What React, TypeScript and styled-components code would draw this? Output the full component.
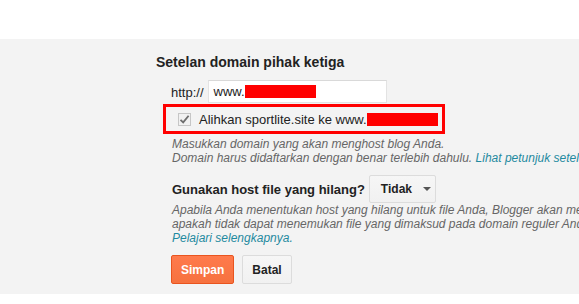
import { createGlobalStyle } from "styled-components";
import styled from "styled-components";

const GlobalStyle = createGlobalStyle`
  html, body {
    margin: 0;
    padding: 0;
    background: #ffffff;
    overflow: hidden;
  }
  body {
    font-family: Arial, "Liberation Sans", sans-serif;
    color: #222;
  }
`;

const App = () => {
    return (
        <>
            <GlobalStyle />
            <_Top />
            <_Panel>
                <_Title>Setelan domain pihak ketiga</_Title>
                <_DomainRow>
                    <_Prefix>http://</_Prefix>
                    <_Input>
                        www.<_Redact width={71} />
                    </_Input>
                </_DomainRow>
                <_Highlight>
                    <_Checkbox>
                        <svg width="11" height="11" viewBox="0 0 11 11">
                            <path d="M1.5 5.8 L4.2 8.4 L9.6 1.8" fill="none" stroke="#6d6d6d" strokeWidth="1.8" />
                        </svg>
                    </_Checkbox>
                    <_CheckLabel>
                        Alihkan sportlite.site ke www.<_Redact width={71} />
                    </_CheckLabel>
                </_Highlight>
                <_Help>
                    Masukkan domain yang akan menghost blog Anda.<br />
                    Domain harus didaftarkan dengan benar terlebih dahulu. <_Link>Lihat petunjuk setelan</_Link>
                </_Help>
                <_HostRow>
                    <_Label>Gunakan host file yang hilang?</_Label>
                    <_Select>
                        Tidak
                        <_Arrow />
                    </_Select>
                </_HostRow>
                <_Help2>
                    Apabila Anda menentukan host yang hilang untuk file Anda, Blogger akan memeriksa host ini<br />
                    apakah tidak dapat menemukan file yang dimaksud pada domain reguler Anda.<br />
                    <_Link>Pelajari selengkapnya.</_Link>
                </_Help2>
                <_Buttons>
                    <_Button primary>Simpan</_Button>
                    <_Button>Batal</_Button>
                </_Buttons>
            </_Panel>
        </>
    );
};

export default App;

// 上の白い帯
const _Top = styled.div`
  height: 39px;
  background: #ffffff;
`;

// グレーのパネル
const _Panel = styled.div`
  background: #f3f3f3;
  height: 255px;
  box-sizing: border-box;
  padding: 15px 0 0 156px;
  display: flex;
  flex-direction: column;
  align-items: flex-start;
  white-space: nowrap;
`;

const _Title = styled.div`
  font-size: 14px;
  font-weight: bold;
  line-height: 17px;
  color: #222;
`;

const _DomainRow = styled.div`
  margin-top: 9px;
  margin-left: 15px;
  display: flex;
  align-items: center;
`;

const _Prefix = styled.span`
  font-size: 13px;
  color: #222;
  margin-right: 4px;
  padding-top: 2px;
`;

const _Input = styled.div`
  width: 179px;
  height: 23px;
  box-sizing: border-box;
  background: #fff;
  border: 1px solid #e3e3e3;
  border-top-color: #d9d9d9;
  padding: 0 0 0 5px;
  font-size: 13px;
  color: #222;
  display: flex;
  align-items: center;
`;

// 黒塗り
const _Redact = styled.span<{ width: number }>`
  display: inline-block;
  width: ${props => props.width}px;
  height: 13px;
  background: #ff0000;
  vertical-align: -2px;
`;

// 赤枠
const _Highlight = styled.div`
  margin-top: 1px;
  margin-left: 7px;
  width: 282px;
  height: 30px;
  box-sizing: border-box;
  border: 3px solid #ff0000;
  display: flex;
  align-items: center;
  padding-left: 12px;
`;

const _Checkbox = styled.span`
  width: 13px;
  height: 13px;
  box-sizing: border-box;
  border: 1px solid #c6c6c6;
  background: #f1f1f1;
  display: flex;
  align-items: center;
  justify-content: center;
  margin-right: 8px;
`;

const _CheckLabel = styled.span`
  font-size: 13px;
  color: #222;
`;

const _Help = styled.div`
  margin-top: 3px;
  margin-left: 16px;
  font-size: 12px;
  line-height: 14px;
  font-style: italic;
  color: #666;
`;

const _Link = styled.span`
  color: #1f8aa0;
`;

const _HostRow = styled.div`
  margin-top: 10px;
  margin-left: 16px;
  display: flex;
  align-items: center;
`;

const _Label = styled.span`
  font-size: 13px;
  font-weight: bold;
  color: #222;
  margin-right: 4px;
`;

const _Select = styled.div`
  width: 67px;
  height: 28px;
  box-sizing: border-box;
  border: 1px solid #dcdcdc;
  border-radius: 2px;
  background: linear-gradient(#f6f6f6, #f1f1f1);
  font-size: 12px;
  font-weight: bold;
  color: #222;
  display: flex;
  align-items: center;
  padding-left: 11px;
`;

const _Arrow = styled.span`
  margin-left: 11px;
  width: 0;
  height: 0;
  border-left: 4px solid transparent;
  border-right: 4px solid transparent;
  border-top: 4px solid #555;
`;

const _Help2 = styled.div`
  margin-top: 0px;
  margin-left: 16px;
  font-size: 12px;
  line-height: 14px;
  font-style: italic;
  color: #666;
`;

const _Buttons = styled.div`
  margin-top: 10px;
  margin-left: 15px;
  display: flex;
  gap: 8px;
`;

const _Button = styled.div<{ primary?: boolean }>`
  height: 29px;
  box-sizing: border-box;
  padding: 0 9px;
  border-radius: 2px;
  border: 1px solid ${props => props.primary ? '#e9541f' : '#dcdcdc'};
  background: ${props => props.primary ? 'linear-gradient(#ff7a4c, #f6723f)' : 'linear-gradient(#f6f6f6, #f1f1f1)'};
  color: ${props => props.primary ? '#ffffff' : '#222'};
  font-size: 12px;
  font-weight: bold;
  display: flex;
  align-items: center;
`;
